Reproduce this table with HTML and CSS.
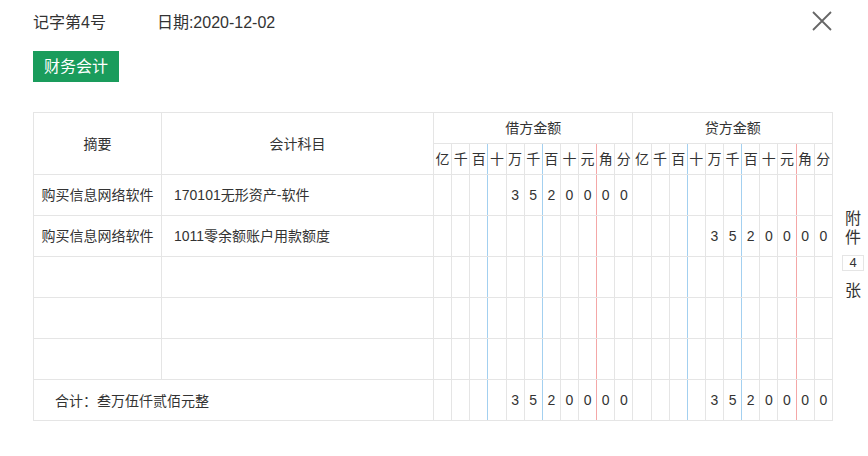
FILE: index.html
```html
<!DOCTYPE html>
<html lang="zh">
<head>
<meta charset="utf-8">
<title>记账凭证</title>
<link rel="stylesheet" href="styles.css">
</head>
<body>
<div class="page">
  <div class="top">
    <span class="no">记字第4号</span>
    <span class="date">日期:2020-12-02</span>
    <svg class="close" viewBox="0 0 20 20" width="20" height="20"><path d="M1 1L19 19M19 1L1 19" stroke="#666" stroke-width="1.8" fill="none"/></svg>
  </div>
  <div class="toolbar"><button class="btn">财务会计</button></div>
  <div class="voucher">
    <table class="grid">
      <colgroup><col class="c1"><col class="c2"><col span="22"></colgroup>
      <thead>
        <tr class="h1">
          <th rowspan="2">摘要</th><th rowspan="2">会计科目</th><th colspan="11">借方金额</th><th colspan="11">贷方金额</th>
        </tr>
        <tr class="h2">
          <th class="d">亿</th><th class="d">千</th><th class="d">百</th><th class="d">十</th><th class="d">万</th><th class="d">千</th><th class="d">百</th><th class="d">十</th><th class="d">元</th><th class="d">角</th><th class="d">分</th>
          <th class="d">亿</th><th class="d">千</th><th class="d">百</th><th class="d">十</th><th class="d">万</th><th class="d">千</th><th class="d">百</th><th class="d">十</th><th class="d">元</th><th class="d">角</th><th class="d">分</th>
        </tr>
      </thead>
      <tbody>
        <tr class="row">
          <td class="sum">购买信息网络软件</td><td class="subj">170101无形资产-软件</td>
          <td class="d"></td><td class="d"></td><td class="d"></td><td class="d"></td><td class="d">3</td><td class="d">5</td><td class="d">2</td><td class="d">0</td><td class="d">0</td><td class="d">0</td><td class="d">0</td>
          <td class="d"></td><td class="d"></td><td class="d"></td><td class="d"></td><td class="d"></td><td class="d"></td><td class="d"></td><td class="d"></td><td class="d"></td><td class="d"></td><td class="d"></td>
        </tr>
        <tr class="row">
          <td class="sum">购买信息网络软件</td><td class="subj">1011零余额账户用款额度</td>
          <td class="d"></td><td class="d"></td><td class="d"></td><td class="d"></td><td class="d"></td><td class="d"></td><td class="d"></td><td class="d"></td><td class="d"></td><td class="d"></td><td class="d"></td>
          <td class="d"></td><td class="d"></td><td class="d"></td><td class="d"></td><td class="d">3</td><td class="d">5</td><td class="d">2</td><td class="d">0</td><td class="d">0</td><td class="d">0</td><td class="d">0</td>
        </tr>
        <tr class="row">
          <td class="sum"></td><td class="subj"></td>
          <td class="d"></td><td class="d"></td><td class="d"></td><td class="d"></td><td class="d"></td><td class="d"></td><td class="d"></td><td class="d"></td><td class="d"></td><td class="d"></td><td class="d"></td>
          <td class="d"></td><td class="d"></td><td class="d"></td><td class="d"></td><td class="d"></td><td class="d"></td><td class="d"></td><td class="d"></td><td class="d"></td><td class="d"></td><td class="d"></td>
        </tr>
        <tr class="row">
          <td class="sum"></td><td class="subj"></td>
          <td class="d"></td><td class="d"></td><td class="d"></td><td class="d"></td><td class="d"></td><td class="d"></td><td class="d"></td><td class="d"></td><td class="d"></td><td class="d"></td><td class="d"></td>
          <td class="d"></td><td class="d"></td><td class="d"></td><td class="d"></td><td class="d"></td><td class="d"></td><td class="d"></td><td class="d"></td><td class="d"></td><td class="d"></td><td class="d"></td>
        </tr>
        <tr class="row">
          <td class="sum"></td><td class="subj"></td>
          <td class="d"></td><td class="d"></td><td class="d"></td><td class="d"></td><td class="d"></td><td class="d"></td><td class="d"></td><td class="d"></td><td class="d"></td><td class="d"></td><td class="d"></td>
          <td class="d"></td><td class="d"></td><td class="d"></td><td class="d"></td><td class="d"></td><td class="d"></td><td class="d"></td><td class="d"></td><td class="d"></td><td class="d"></td><td class="d"></td>
        </tr>
        <tr class="row total">
          <td class="tot" colspan="2">合计<span class="colon">：</span>叁万伍仟贰佰元整</td>
          <td class="d"></td><td class="d"></td><td class="d"></td><td class="d"></td><td class="d">3</td><td class="d">5</td><td class="d">2</td><td class="d">0</td><td class="d">0</td><td class="d">0</td><td class="d">0</td>
          <td class="d"></td><td class="d"></td><td class="d"></td><td class="d"></td><td class="d">3</td><td class="d">5</td><td class="d">2</td><td class="d">0</td><td class="d">0</td><td class="d">0</td><td class="d">0</td>
        </tr>
      </tbody>
    </table>
    <div class="attach">
      <span class="ch">附</span>
      <span class="ch">件</span>
      <span class="cnt">4</span>
      <span class="ch last">张</span>
    </div>
  </div>
</div>
</body>
</html>
```
FILE: styles.css
```css
body {
  margin: 0;
  background: #fff;
  color: #333;
  font-family: "Liberation Sans", "Noto Sans CJK SC", sans-serif;
}
.page {
  padding-left: 33px;
}
.top {
  display: flex;
  align-items: center;
  height: 46px;
  padding-right: 36px;
  font-size: 16px;
  line-height: 20px;
}
.date {
  margin-left: 51px;
}
.close {
  margin-left: auto;
  align-self: flex-start;
  margin-top: 11px;
}
.toolbar {
  margin-top: 5px;
  height: 31px;
}
.btn {
  display: block;
  width: 86px;
  height: 31px;
  padding: 0;
  border: 0;
  background: #1a9c5c;
  color: #fff;
  font-family: inherit;
  font-size: 16px;
  line-height: 31px;
  text-align: center;
}
.voucher {
  display: flex;
  align-items: flex-start;
  margin-top: 30px;
}
.grid {
  width: 800px;
  table-layout: fixed;
  border-collapse: collapse;
  font-size: 14px;
  line-height: 18px;
}
.grid .c1 { width: 128px; }
.grid .c2 { width: 272px; }
.grid th,
.grid td {
  border: 1px solid #e5e5e5;
  padding: 0;
  font-weight: normal;
  white-space: nowrap;
  overflow: hidden;
}
.grid th {
  text-align: center;
}
.h1 th, .h2 th {
  height: 30px;
}
.row td {
  height: 40px;
}
.grid .d {
  text-align: center;
}
.grid .d:nth-last-child(20),
.grid .d:nth-last-child(17),
.grid .d:nth-last-child(9),
.grid .d:nth-last-child(6) {
  border-right-color: #a3d0f0;
}
.grid .d:nth-last-child(14),
.grid .d:nth-last-child(3) {
  border-right-color: #f4a7a7;
}
.sum {
  text-align: center;
}
.subj {
  padding-left: 12px !important;
}
.tot {
  padding-left: 21px !important;
}
.colon {
  font-family: "Noto Sans CJK TC", sans-serif;
}
.attach {
  display: flex;
  flex-direction: column;
  align-items: center;
  width: 24px;
  margin-left: 8px;
  margin-top: 97px;
  font-size: 16px;
  line-height: 19px;
}
.cnt {
  width: 20px;
  height: 14px;
  margin-top: 8px;
  border: 1px solid #e5e5e5;
  font-size: 13px;
  line-height: 14px;
  text-align: center;
}
.last {
  margin-top: 10px;
}
```
